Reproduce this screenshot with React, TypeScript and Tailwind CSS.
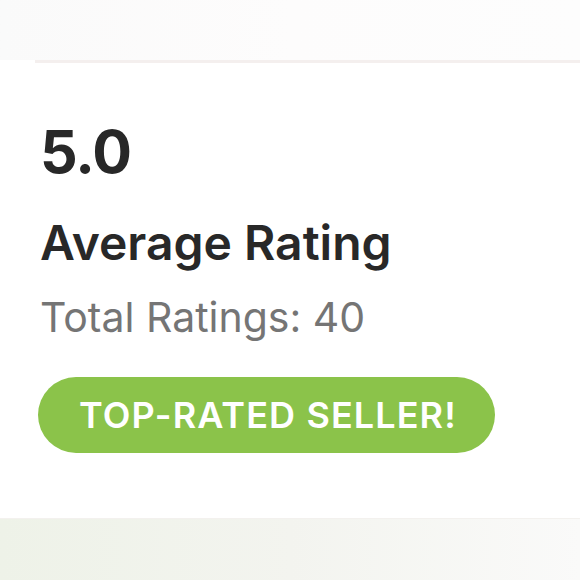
export default function App() {
  return (
    <div className="w-[580px] h-[580px] overflow-hidden bg-white flex flex-col" style={{ fontFamily: 'Inter, "Open Sans", sans-serif' }}>
      <div className="h-[60px] bg-gradient-to-r from-[#fafafa] via-[#fdfcfc] to-[#fdfdfd]" />
      <div className="ml-[35px] h-[3px] bg-[#f4efee]" />
      <div className="flex-1 px-[40px] pt-[59px] flex flex-col items-start">
        <div className="text-[59px] leading-none font-bold text-[#282828] tracking-[-1px]">5.0</div>
        <div className="mt-[38px] text-[48px] leading-none font-semibold text-[#282828]">Average Rating</div>
        <div className="mt-[30px] text-[41px] leading-none font-normal text-[#757575]">Total Ratings: 40</div>
        <div className="mt-[39px] h-[76px] w-[457px] -ml-[2px] rounded-full bg-[#8bc34a] flex items-center pl-[41px]">
          <span className="text-[36px] leading-none font-semibold text-white tracking-[1.1px]">TOP-RATED SELLER!</span>
        </div>
      </div>
      <div className="h-[62px] border-t border-[#f3f1ee] bg-gradient-to-r from-[#eef2e8] via-[#f3f4ef] to-[#fafaf9]" />
    </div>
  );
}
